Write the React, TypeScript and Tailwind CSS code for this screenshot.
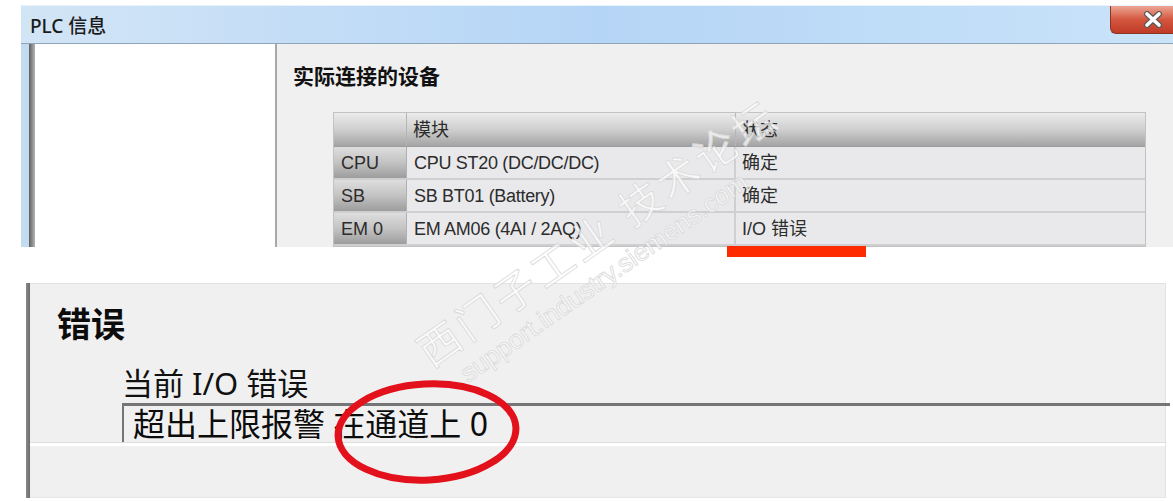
import React from 'react';

const CJK = "font-['Noto_Sans','Noto_Sans_CJK_SC',sans-serif]";
const TABLE_LATIN = "font-['Liberation_Sans','Noto_Sans_CJK_SC',sans-serif]";

const ROWS = [
  { slot: 'CPU', module: 'CPU ST20 (DC/DC/DC)', status: '确定' },
  { slot: 'SB', module: 'SB BT01 (Battery)', status: '确定' },
  { slot: 'EM 0', module: 'EM AM06 (4AI / 2AQ)', status: 'I/O 错误' },
];

function CloseButton() {
  return (
    <div className="absolute right-0 top-0 h-[28px] w-[63px] rounded-bl-[6px] border-b border-l border-[#8b3426] bg-gradient-to-b from-[#eba593] via-[#d4563f] to-[#c03b27]">
      <svg className="absolute left-[32px] top-[5px]" width="20" height="17" viewBox="0 0 20 17">
        <path d="M4 3 L16 14 M16 3 L4 14" stroke="#5a5a5a" strokeWidth="6" strokeLinecap="round" />
        <path d="M4 3 L16 14 M16 3 L4 14" stroke="#ffffff" strokeWidth="3.6" strokeLinecap="round" />
      </svg>
    </div>
  );
}

function DeviceTable() {
  return (
    <div className="ml-[40px] mt-[23px] w-[813px] border border-[#c2c2c2] text-[#2c2c2c]">
      <div className="flex h-[34px] border-b border-[#9c9c9c] bg-gradient-to-b from-[#ececec] via-[#cfcfcf] to-[#a4a4a4]">
        <div className="w-[73px] border-r border-[#b5b5b5]" />
        <div className={`w-[329px] border-r border-[#b5b5b5] pl-[6px] pt-[3px] text-[18px] leading-[26px] ${CJK}`}>模块</div>
        <div className={`flex-1 pl-[6px] pt-[3px] text-[18px] leading-[26px] ${CJK}`}>状态</div>
      </div>
      {ROWS.map((r) => (
        <div key={r.slot} className="flex h-[33px] border-b-2 border-[#cfcfd1] bg-[#e9e9eb]">
          <div className={`w-[73px] border-r border-[#b0b0b0] bg-gradient-to-b from-[#dedede] via-[#c3c3c3] to-[#9d9d9d] pl-[7px] pt-[4px] text-[18px] leading-[24px] ${TABLE_LATIN}`}>
            {r.slot}
          </div>
          <div className={`w-[329px] border-r-2 border-[#cfcfd1] pl-[7px] pt-[4px] text-[18px] leading-[24px] tracking-[-0.3px] ${TABLE_LATIN}`}>
            {r.module}
          </div>
          <div className={`flex-1 pl-[6px] pt-[4px] text-[18px] leading-[24px] ${TABLE_LATIN}`}>{r.status}</div>
        </div>
      ))}
    </div>
  );
}

function Watermark() {
  return (
    <div className="pointer-events-none absolute left-[392px] top-[205px] -rotate-[35deg] select-none text-white/70 [-webkit-text-stroke:0.8px_#d9d9d9]">
      <div className={`whitespace-nowrap text-[42px] leading-[50px] tracking-[4px] ${CJK}`}>西门子工业 技术论坛</div>
      <div className="ml-[22px] whitespace-nowrap font-['Liberation_Sans',sans-serif] text-[26px] leading-[30px]">
        support.industry.siemens.com
      </div>
    </div>
  );
}

export default function App() {
  return (
    <div className="relative h-[501px] w-[1173px] overflow-hidden bg-white">
      {/* PLC info window */}
      <div className="ml-[21px] pt-[5px]">
        <div className="relative flex h-[242px] flex-col bg-[#c3dbf1]">
          <div className="relative h-[42px] border-t border-[#e9f3fc] bg-gradient-to-r from-[#d2e5f6] via-[#b5d5f6] to-[#c9e3f9] pl-[9px] pt-[8px]">
            <span className={`text-[19px] font-medium leading-[24px] text-[#1b1b1b] ${CJK}`}>PLC 信息</span>
            <CloseButton />
          </div>
          <div className="flex flex-1 border-t border-[#90a4b8] pl-[8px]">
            <div className="w-[6px] bg-gradient-to-r from-[#5f5f5f] via-[#8a8a8a] to-[#b4b4b4]" />
            <div className="w-[240px] bg-white" />
            <div className="w-[2px] bg-[#a8a8a8]" />
            <div className="flex-1 bg-[#f0f0f0] pl-[16px] pt-[20px]">
              <div className={`text-[21px] font-bold leading-[25px] text-[#111] ${CJK}`}>实际连接的设备</div>
              <DeviceTable />
            </div>
          </div>
        </div>
      </div>

      <div className="h-[36px]" />

      {/* Error section */}
      <div className="ml-[26px] flex h-[215px]">
        <div className="w-[4px] bg-gradient-to-r from-[#8a8a8a] to-[#6c6c6c]" />
        <div className="flex w-[1136px] flex-col border-r border-t border-[#e2e2e2] bg-[#f0f0f0]">
          <div className={`ml-[27px] mt-[19px] text-[34px] font-bold leading-[42px] text-[#0c0c0c] ${CJK}`}>错误</div>
          <div className={`ml-[92px] mt-[20px] text-[31px] leading-[36px] text-[#111] ${CJK}`}>当前 I/O 错误</div>
          <div className="ml-[92px] mt-[2px] w-[1048px] border-l-2 border-t-[3px] border-[#757575] pl-[9px]">
            <div className={`h-[36px] text-[32px] leading-[36px] text-[#0c0c0c] ${CJK}`}>超出上限报警 在通道上 0</div>
          </div>
          <div className="h-[1px] bg-[#dcdcdc]" />
          <div className="h-[3px] bg-white" />
          <div className="flex-1 border-b border-[#e6e6e6]" />
        </div>
      </div>

      <Watermark />

      {/* annotations */}
      <div className="absolute left-[727px] top-[246px] h-[11px] w-[139px] bg-[#ff2b00]" />
      <svg className="absolute left-[330px] top-[378px]" width="200" height="112" viewBox="0 0 200 112">
        <ellipse cx="97" cy="54" rx="89" ry="48" fill="none" stroke="#e3111c" strokeWidth="7" transform="rotate(-3 97 54)" />
      </svg>
    </div>
  );
}
